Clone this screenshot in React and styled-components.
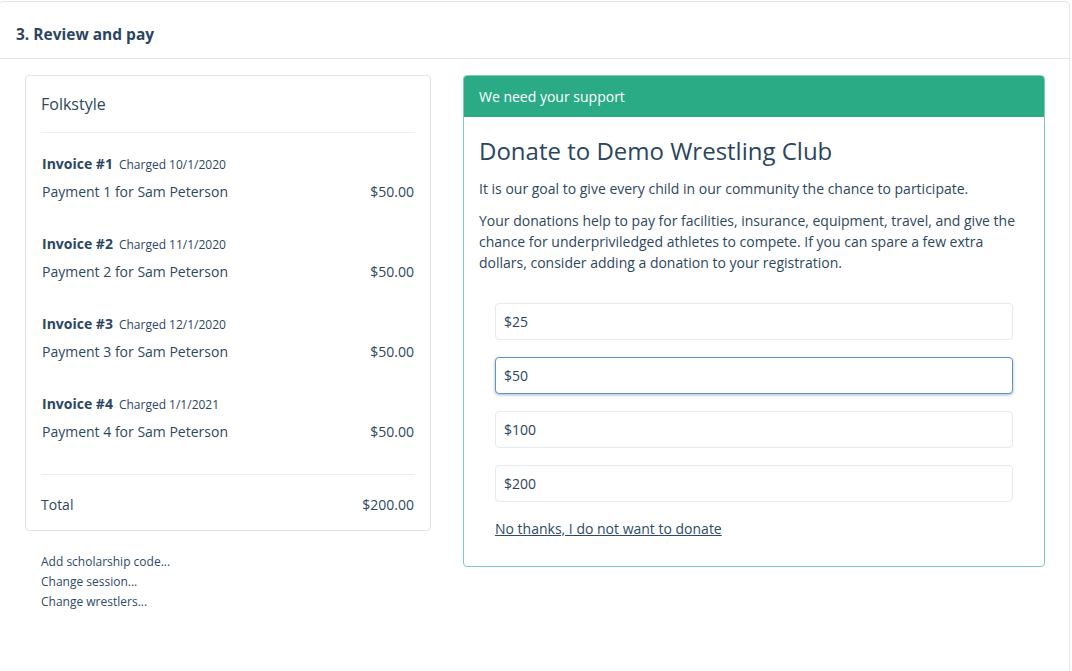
import styled, { createGlobalStyle } from "styled-components";

const GlobalStyle = createGlobalStyle`
  html, body {
    margin: 0;
    padding: 0;
    background: #ffffff;
  }
  body {
    font-family: "Open Sans", "Liberation Sans", sans-serif;
    color: #2d4760;
    -webkit-font-smoothing: antialiased;
  }
  * { box-sizing: border-box; }
`;

const Panel = styled.div`
  margin: 1px 2px 0 -2px;
  height: 680px;
  border: 1px solid #e3e7eb;
  border-radius: 5px;
  background: #fff;
`;

const PanelHeader = styled.div`
  height: 57px;
  padding: 8px 17px 0;
  display: flex;
  align-items: center;
  border-bottom: 1px solid #e3e7eb;
  font-size: 15.5px;
  font-weight: 700;
  color: #2b4560;
`;

const PanelBody = styled.div`
  display: grid;
  grid-template-columns: 406px 582px;
  gap: 32px;
  align-items: start;
  padding: 16px 0 0 26px;
`;

const Card = styled.div`
  border: 1px solid #dfe2e6;
  border-radius: 4px;
  padding: 0 15px;
  background: #fff;
`;

const CardTitle = styled.div`
  font-size: 16px;
  padding: 17px 0 17px;
  border-bottom: 1px solid #eceef0;
`;

const Invoice = styled.div`
  padding: 21px 0 0 1px;
  height: ${(p) => (p.$last ? "101px" : "80px")};
`;

const InvoiceHead = styled.div`
  display: flex;
  align-items: baseline;
  gap: 6px;
  font-size: 14px;
  font-weight: 700;
  line-height: 19px;
`;

const Charged = styled.span`
  font-size: 12px;
  font-weight: 400;
`;

const Line = styled.div`
  display: flex;
  justify-content: space-between;
  font-size: 14px;
  line-height: 19px;
  margin-top: 8px;
  padding-right: ${(p) => (p.$pad ? "1px" : "0")};
`;

const TotalRow = styled(Line)`
  margin-top: 0;
  border-top: 1px solid #eceef0;
  padding: 20px 1px 16px 0;
`;

const Links = styled.div`
  display: flex;
  flex-direction: column;
  padding: 21px 0 0 16px;
  font-size: 12px;
  line-height: 20px;
  color: #2d4a68;
`;

const DonateCard = styled.div`
  border: 1px solid #7ccdb5;
  border-radius: 4px;
  overflow: hidden;
  background: #fff;
`;

const DonateHeader = styled.div`
  background: #2aab86;
  color: #fff;
  font-size: 14px;
  padding: 0 15px 1px;
  height: 41px;
  display: flex;
  align-items: center;
`;

const DonateBody = styled.div`
  padding: 17px 15px 27px;
`;

const Title = styled.h2`
  margin: 0 0 10px;
  font-size: 24px;
  font-weight: 400;
  line-height: 34px;
  color: #2b4560;
`;

const Para = styled.p`
  margin: 0 0 11px;
  font-size: 14px;
  line-height: 21px;
`;

const Options = styled.div`
  display: flex;
  flex-direction: column;
  gap: 17px;
  padding: 19px 16px 0;
`;

const Option = styled.button`
  height: 37px;
  text-align: left;
  padding: 0 8px;
  font-family: inherit;
  font-size: 14px;
  color: #2b4560;
  background: #fff;
  border-radius: 4px;
  border: 1px solid ${(p) => (p.$active ? "#5f93c0" : "#e6eaee")};
  box-shadow: ${(p) => (p.$active ? "0 1px 3px rgba(60, 100, 140, 0.45)" : "none")};
  cursor: pointer;
`;

const Decline = styled.a`
  display: inline-block;
  margin: 17px 0 0 16px;
  font-size: 14px;
  color: #2d4a68;
  text-decoration: underline;
  cursor: pointer;
`;

const invoices = [
  { n: 1, date: "10/1/2020" },
  { n: 2, date: "11/1/2020" },
  { n: 3, date: "12/1/2020" },
  { n: 4, date: "1/1/2021" },
];

const amounts = ["$25", "$50", "$100", "$200"];

export default function App() {
  return (
    <>
      <GlobalStyle />
      <Panel>
        <PanelHeader>3. Review and pay</PanelHeader>
        <PanelBody>
          <div>
            <Card>
              <CardTitle>Folkstyle</CardTitle>
              {invoices.map((inv, i) => (
                <Invoice key={inv.n} $last={i === invoices.length - 1}>
                  <InvoiceHead>
                    Invoice #{inv.n}
                    <Charged>Charged {inv.date}</Charged>
                  </InvoiceHead>
                  <Line $pad>
                    <span>Payment {inv.n} for Sam Peterson</span>
                    <span>$50.00</span>
                  </Line>
                </Invoice>
              ))}
              <TotalRow>
                <span>Total</span>
                <span>$200.00</span>
              </TotalRow>
            </Card>
            <Links>
              <span>Add scholarship code...</span>
              <span>Change session...</span>
              <span>Change wrestlers...</span>
            </Links>
          </div>
          <DonateCard>
            <DonateHeader>We need your support</DonateHeader>
            <DonateBody>
              <Title>Donate to Demo Wrestling Club</Title>
              <Para>It is our goal to give every child in our community the chance to participate.</Para>
              <Para>
                Your donations help to pay for facilities, insurance, equipment, travel, and give the
                chance for underpriviledged athletes to compete. If you can spare a few extra
                dollars, consider adding a donation to your registration.
              </Para>
              <Options>
                {amounts.map((a) => (
                  <Option key={a} $active={a === "$50"}>{a}</Option>
                ))}
              </Options>
              <Decline>No thanks, I do not want to donate</Decline>
            </DonateBody>
          </DonateCard>
        </PanelBody>
      </Panel>
    </>
  );
}
